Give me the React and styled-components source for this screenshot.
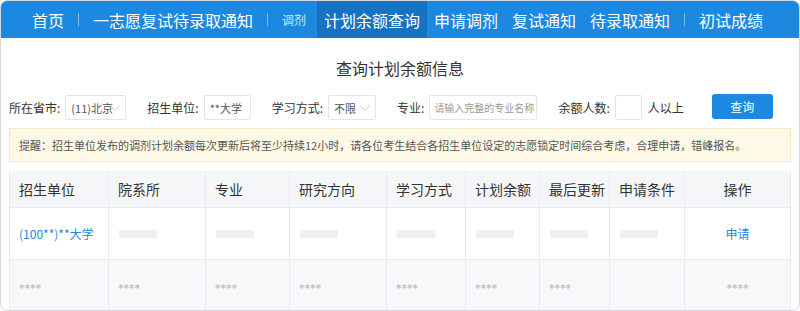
import React from "react";
import styled, { createGlobalStyle } from "styled-components";

const Global = createGlobalStyle`
  html, body {
    margin: 0;
    padding: 0;
    background: #fff;
  }
  body {
    font-family: "Noto Sans CJK SC", "Noto Sans", sans-serif;
    color: #333;
  }
  * { box-sizing: border-box; }
`;

const Card = styled.div`
  width: 800px;
  height: 311px;
  border: 1px solid #d6d8db;
  border-radius: 7px;
  overflow: hidden;
  background: #fff;
`;

const Nav = styled.div`
  height: 37px;
  background: #1c88df;
  display: flex;
  align-items: stretch;
  padding-left: 24px;
`;

const NavItem = styled.div`
  display: flex;
  align-items: center;
  padding: 0 7px;
  font-size: ${({ small }) => (small ? "12px" : "16px")};
  color: ${({ small }) => (small ? "rgba(255,255,255,0.8)" : "#fff")};
  background: ${({ active }) => (active ? "#1773c2" : "transparent")};
  margin-right: ${({ small }) => (small ? "4px" : "0")};
  white-space: nowrap;
`;

const Sep = styled.div`
  width: 1px;
  height: 13px;
  align-self: center;
  margin: 0 7px;
  background: rgba(255, 255, 255, 0.45);
`;

const Main = styled.div`
  padding: 0 8px;
`;

const Title = styled.div`
  text-align: center;
  font-size: 16px;
  line-height: 20px;
  padding-top: 20px;
  margin-bottom: 17px;
  color: #333;
`;

const FormRow = styled.div`
  display: flex;
  align-items: center;
  height: 25px;
`;

const Field = styled.div`
  display: flex;
  align-items: center;
  margin-right: ${({ gap }) => gap ?? 21}px;
`;

const Label = styled.span`
  font-size: 12px;
  color: #333;
  margin-right: 5px;
  white-space: nowrap;
`;

const Box = styled.div`
  position: relative;
  width: ${({ w }) => w}px;
  height: 25px;
  border: 1px solid #e3e5e8;
  border-radius: 2px;
  display: flex;
  align-items: center;
  padding-left: ${({ hint }) => (hint ? "4px" : "5px")};
  font-size: ${({ hint }) => (hint ? "10px" : "11px")};
  color: ${({ hint }) => (hint ? "#999" : "#555")};
  white-space: nowrap;
  overflow: hidden;
`;

const Chevron = styled.svg`
  position: absolute;
  right: 5px;
  top: 9px;
`;

const Button = styled.button`
  margin-left: 28px;
  width: 61px;
  height: 25px;
  margin-top: -2px;
  border: none;
  border-radius: 3px;
  background: #1c88df;
  color: #fff;
  font-family: inherit;
  font-size: 12px;
`;

const Alert = styled.div`
  margin-top: 8px;
  height: 34px;
  background: #fef8e6;
  border: 1px solid #f8ebc3;
  display: flex;
  align-items: center;
  padding-left: 9px;
  font-size: 11px;
  color: #555;
  white-space: nowrap;
`;

const Table = styled.div`
  margin-top: 9px;
  width: 781px;
  display: grid;
  grid-template-columns: 99px 97px 84px 97px 79px 74px 70px 75px 106px;
  border-left: 1px solid #e9ebee;
`;

const Cell = styled.div`
  height: ${({ h }) => h}px;
  display: flex;
  align-items: center;
  justify-content: ${({ center }) => (center ? "center" : "flex-start")};
  padding-left: ${({ center }) => (center ? "0" : "9px")};
  border-right: 1px solid #e9ebee;
  border-bottom: 1px solid #e9ebee;
  background: ${({ bg }) => bg};
  font-size: ${({ size }) => size}px;
  color: ${({ color }) => color};
  white-space: nowrap;
`;

const Bar = styled.div`
  width: 38px;
  height: 8px;
  margin-left: 1px;
  background: #eeeff0;
`;

const Stars = styled.span`
  font-family: "DejaVu Sans", sans-serif;
  font-size: 11px;
  line-height: 11px;
  padding-top: 5px;
  color: #b0b0b0;
`;

const headers = ["招生单位", "院系所", "专业", "研究方向", "学习方式", "计划余额", "最后更新", "申请条件", "操作"];

const ChevronIcon = () => (
  <Chevron width="10" height="6" viewBox="0 0 10 6">
    <polyline points="0.5,0.5 5,5.5 9.5,0.5" fill="none" stroke="#c8ccd0" strokeWidth="1" />
  </Chevron>
);

export default function App() {
  return (
    <>
      <Global />
      <Card>
        <Nav>
          <NavItem>首页</NavItem>
          <Sep />
          <NavItem>一志愿复试待录取通知</NavItem>
          <Sep />
          <NavItem small>调剂</NavItem>
          <NavItem active>计划余额查询</NavItem>
          <NavItem>申请调剂</NavItem>
          <NavItem>复试通知</NavItem>
          <NavItem>待录取通知</NavItem>
          <Sep />
          <NavItem>初试成绩</NavItem>
        </Nav>
        <Main>
          <Title>查询计划余额信息</Title>
          <FormRow>
            <Field>
              <Label>所在省市:</Label>
              <Box w={61}>
                (11)北京
                <ChevronIcon />
              </Box>
            </Field>
            <Field>
              <Label>招生单位:</Label>
              <Box w={47}>**大学</Box>
            </Field>
            <Field>
              <Label>学习方式:</Label>
              <Box w={48}>
                不限
                <ChevronIcon />
              </Box>
            </Field>
            <Field>
              <Label>专业:</Label>
              <Box w={108} hint>请输入完整的专业名称</Box>
            </Field>
            <Field gap={0}>
              <Label>余额人数:</Label>
              <Box w={27} />
              <Label style={{ marginLeft: 6, marginRight: 0 }}>人以上</Label>
            </Field>
            <Button>查询</Button>
          </FormRow>
          <Alert>
            提醒：招生单位发布的调剂计划余额每次更新后将至少持续12小时，请各位考生结合各招生单位设定的志愿锁定时间综合考虑，合理申请，错峰报名。
          </Alert>
          <Table>
            {headers.map((h, i) => (
              <Cell key={h} h={37} bg="#f5f6f8" size={14} color="#333" center={i === 8}>
                {h}
              </Cell>
            ))}
            <Cell h={52} bg="#fff" size={12} color="#1c88df">(100**)**大学</Cell>
            {[1, 2, 3, 4, 5, 6, 7].map((k) => (
              <Cell key={k} h={52} bg="#fff">
                <Bar />
              </Cell>
            ))}
            <Cell h={52} bg="#fff" size={12} color="#1c88df" center>申请</Cell>
            {headers.map((h, i) => (
              <Cell key={"s" + h} h={52} bg="#f7f8fa" center={i === 8}>
                {i === 7 ? null : <Stars>****</Stars>}
              </Cell>
            ))}
          </Table>
        </Main>
      </Card>
    </>
  );
}
